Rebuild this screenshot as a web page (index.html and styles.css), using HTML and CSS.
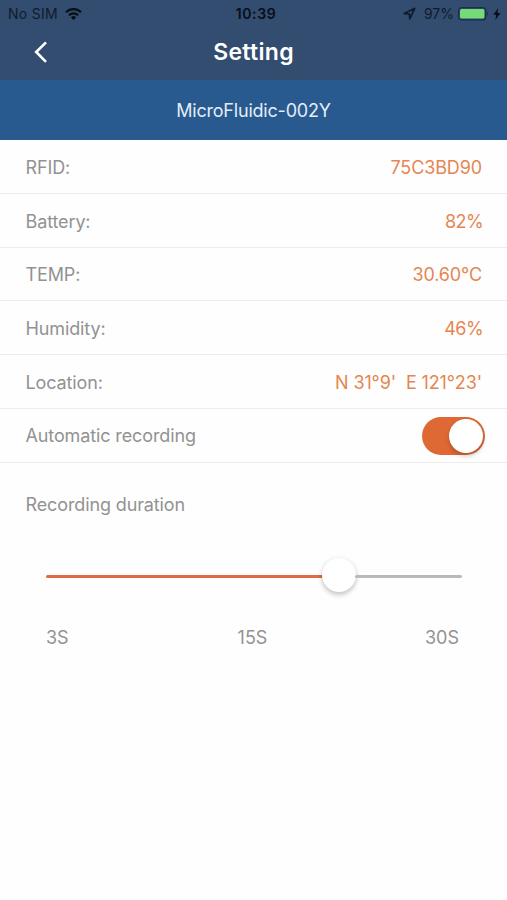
FILE: index.html
```
<!DOCTYPE html>
<html lang="en">
<head>
    <meta charset="UTF-8">
    <meta name="viewport" content="width=device-width, initial-scale=1.0">
    <title>Setting</title>
    <link rel="stylesheet" href="styles.css">
</head>
<body>
    <header>
        <div class="status-bar">
            <div class="carrier">
                <span class="sim">No SIM</span>
                <svg width="17" height="12" viewBox="0 0 17 12" fill="none" stroke="#0a0e18" stroke-width="2.2">
                    <path d="M1 4.2a10.8 10.8 0 0 1 15 0"/>
                    <path d="M3.9 7.2a6.6 6.6 0 0 1 9.2 0"/>
                    <path d="M8.5 12L5.9 9.4a3.7 3.7 0 0 1 5.2 0z" fill="#0a0e18" stroke="none"/>
                </svg>
            </div>
            <div class="time">10:39</div>
            <div class="power">
                <svg width="13" height="13" viewBox="0 0 13 13" fill="none" stroke="#101a2b" stroke-width="1.7" stroke-linejoin="round">
                    <path d="M1.2 6.6L11.7 1.3L6.8 11.8L6.3 6.9z"/>
                </svg>
                <span class="percent">97%</span>
                <svg width="32" height="14" viewBox="0 0 32 14">
                    <rect x="0.7" y="0.7" width="27" height="12.2" rx="3" fill="none" stroke="#1d3049" stroke-width="1.3"/>
                    <rect x="2" y="2" width="24.4" height="9.6" rx="1.6" fill="#75db78"/>
                    <path d="M29 4.6q2 2.2 0 4.4z" fill="#1d3049"/>
                </svg>
                <svg class="bolt" width="8" height="12" viewBox="0 0 8 12">
                    <path d="M5.3 0L0.3 6.7h3L2.3 12L7.6 4.9H4.4z" fill="#0a0e18"/>
                </svg>
            </div>
        </div>
        <div class="nav">
            <svg class="back" width="14" height="22" viewBox="0 0 14 22" fill="none" stroke="#fff" stroke-width="2.6">
                <path d="M12 1.3L2.2 11L12 20.8"/>
            </svg>
            <h1>Setting</h1>
        </div>
    </header>
    <div class="device">MicroFluidic-002Y</div>
    <main>
        <div class="row"><span>RFID:</span><span class="value">75C3BD90</span></div>
        <div class="row"><span>Battery:</span><span class="value percentage">82%</span></div>
        <div class="row"><span>TEMP:</span><span class="value">30.60°C</span></div>
        <div class="row"><span>Humidity:</span><span class="value percentage">46%</span></div>
        <div class="row"><span>Location:</span><span class="value">N 31°9'&nbsp; E 121°23'</span></div>
        <div class="row switch-row"><span>Automatic recording</span><span class="switch"><span class="switch-knob"></span></span></div>
        <section class="duration">
            <div class="duration-title">Recording duration</div>
            <div class="slider">
                <div class="track-on"></div>
                <div class="slider-knob"></div>
                <div class="track-off"></div>
            </div>
            <div class="scale">
                <span>3S</span>
                <span>15S</span>
                <span>30S</span>
            </div>
        </section>
    </main>
</body>
</html>
```
FILE: styles.css
```
* {
    box-sizing: border-box;
}
body {
    margin: 0;
    background: #fefefe;
    font-family: Inter, "Liberation Sans", sans-serif;
    font-size: 18px;
    color: #929292;
    white-space: nowrap;
}
svg {
    display: block;
    flex: none;
}
header {
    height: 80px;
    background: #324d70;
}
.status-bar {
    display: grid;
    grid-template-columns: 1fr auto 1fr;
    align-items: center;
    height: 27px;
    padding: 0 6px 0 8px;
    font-size: 14px;
    color: #111b2c;
}
.carrier, .power {
    display: flex;
    align-items: center;
}
.carrier {
    gap: 7px;
}
.sim {
    letter-spacing: 0.3px;
}
.time {
    padding-left: 3px;
    font-weight: 600;
    letter-spacing: 0.6px;
    color: #080d18;
}
.power {
    justify-content: flex-end;
}
.percent {
    margin: 0 4px 0 8px;
}
.bolt {
    margin-left: 3px;
}
.nav {
    display: grid;
    grid-template-columns: 60px 1fr 60px;
    align-items: center;
    height: 49px;
}
.back {
    margin: 1px 0 0 34px;
}
h1 {
    margin: 0;
    font-size: 23px;
    font-weight: 600;
    letter-spacing: 0.3px;
    text-align: center;
    color: #fff;
}
.device {
    display: flex;
    align-items: center;
    justify-content: center;
    height: 60px;
    background: #285a90;
    letter-spacing: -0.2px;
    color: #e4edf7;
}
.row {
    display: flex;
    align-items: center;
    justify-content: space-between;
    height: 53.8px;
    padding: 2px 25px 0 25.5px;
    border-bottom: 1px solid #ececec;
    letter-spacing: -0.12px;
}
.value {
    color: #e58652;
}
.percentage {
    margin-right: -1px;
    letter-spacing: -0.6px;
}
.switch-row {
    padding-top: 1px;
}
.switch {
    display: flex;
    justify-content: flex-end;
    width: 63px;
    height: 38px;
    margin-right: -3px;
    padding: 2px;
    border-radius: 19px;
    background: #df6935;
}
.switch-knob {
    width: 34px;
    height: 34px;
    border-radius: 50%;
    background: #fff;
    box-shadow: 0 3px 5px rgba(0, 0, 0, 0.2);
}
.duration {
    padding: 30px 45px 0 46px;
}
.duration-title {
    margin-left: -20.5px;
    line-height: 24px;
    letter-spacing: -0.12px;
}
.slider {
    display: flex;
    align-items: center;
    height: 36px;
    margin-top: 41px;
}
.track-on, .track-off {
    height: 3px;
    margin-top: 1px;
    border-radius: 2px;
}
.track-on {
    width: 277px;
    background: #df6c42;
}
.track-off {
    flex: 1;
    background: #b9b9b9;
}
.slider-knob {
    width: 34px;
    height: 34px;
    margin: -1px -1px 0;
    border-radius: 50%;
    background: #fff;
    box-shadow: 0 3px 5px rgba(0, 0, 0, 0.2), 0 0 6px rgba(0, 0, 0, 0.06);
}
.scale {
    display: grid;
    grid-template-columns: 1fr auto 1fr;
    margin-top: 32px;
    padding: 0 3px 0 0;
    line-height: 24px;
}
.scale span:last-child {
    text-align: right;
}
```
